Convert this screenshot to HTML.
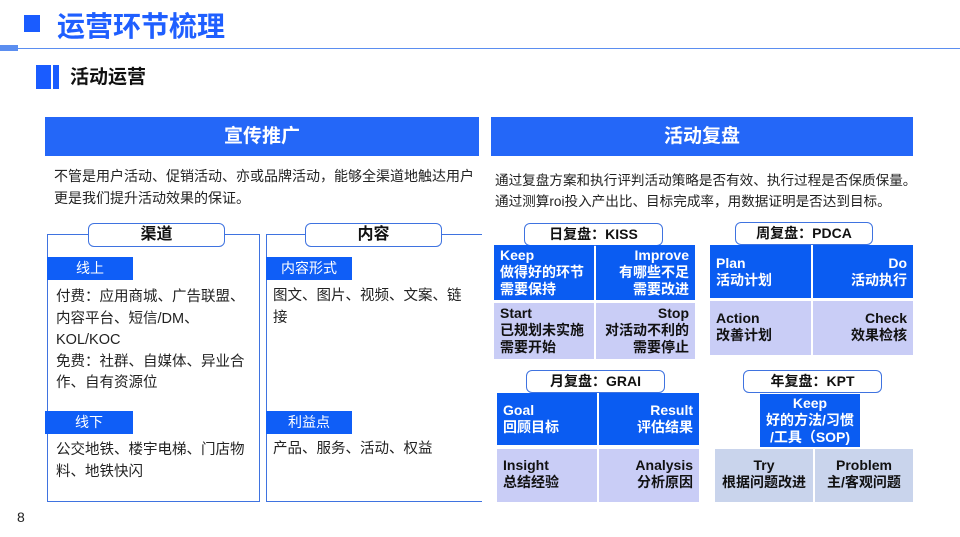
<!DOCTYPE html>
<html><head><meta charset="utf-8"><style>
*{margin:0;padding:0;box-sizing:border-box}
body{width:960px;height:537px;background:#fff;position:relative;overflow:hidden;font-family:"Liberation Sans","Noto Sans CJK SC",sans-serif;color:#222}
.a{position:absolute}
.hdr{background:#2467f8;color:#fff;font-weight:bold;font-size:19px;text-align:center;line-height:39px;height:39px;top:117px}
.box{border:1.5px solid #3f73e0;top:234px;height:268px}
.tab{border:1.5px solid #3f73e0;border-radius:6px;background:#fff;height:24px;font-weight:bold;font-size:16px;text-align:center;line-height:21px;color:#111}
.lab{background:#0f5ef7;color:#fff;font-size:14px;text-align:center;line-height:23px;height:23px;width:86px}
.t{font-size:14.5px;line-height:21.5px;color:#222}
.c{position:absolute;font-weight:bold;font-size:14px;line-height:17px;padding:2px 6px;color:#fff;white-space:nowrap}
.b{background:#0a5cf2}
.l{background:#c9cdf6;color:#111}
.g{background:#c9d4ec;color:#111}
.r{text-align:right}
.rt{font-size:14px;font-weight:bold;height:23px;line-height:20px}
</style></head><body>
<div class="a" style="left:24px;top:15px;width:16px;height:17px;background:#1a5cff"></div>
<div class="a" style="left:57px;top:9px;font-size:28px;font-weight:bold;color:#1f5fff;line-height:36px">运营环节梳理</div>
<div class="a" style="left:0;top:45px;width:18px;height:6px;background:#5b8ef0"></div>
<div class="a" style="left:18px;top:48px;width:942px;height:1px;background:#5b8ef0"></div>
<div class="a" style="left:36px;top:65px;width:15px;height:24px;background:#1a5cff"></div>
<div class="a" style="left:53px;top:65px;width:6px;height:24px;background:#1a5cff"></div>
<div class="a" style="left:70px;top:65px;font-size:19px;font-weight:bold;line-height:26px;color:#111">活动运营</div>

<div class="a hdr" style="left:45px;width:434px">宣传推广</div>
<div class="a hdr" style="left:491px;width:422px">活动复盘</div>
<div class="a t" style="left:54px;top:165px;font-size:14px;line-height:22px">不管是用户活动、促销活动、亦或品牌活动，能够全渠道地触达用户<br>更是我们提升活动效果的保证。</div>
<div class="a t" style="left:495px;top:170px;font-size:13.6px;line-height:21px">通过复盘方案和执行评判活动策略是否有效、执行过程是否保质保量。<br>通过测算roi投入产出比、目标完成率，用数据证明是否达到目标。</div>

<div class="a box" style="left:47px;width:213px"></div>
<div class="a box" style="left:266px;width:216px;border-right:none"></div>
<div class="a tab" style="left:88px;top:223px;width:137px">渠道</div>
<div class="a tab" style="left:305px;top:223px;width:137px">内容</div>
<div class="a lab" style="left:47px;top:257px">线上</div>
<div class="a lab" style="left:45px;top:411px;width:88px">线下</div>
<div class="a lab" style="left:266px;top:257px">内容形式</div>
<div class="a lab" style="left:266px;top:411px">利益点</div>
<div class="a t" style="left:56px;top:287px">付费：应用商城、广告联盟、<br>内容平台、短信/DM、<br>KOL/KOC<br>免费：社群、自媒体、异业合<br>作、自有资源位</div>
<div class="a t" style="left:56px;top:440px">公交地铁、楼宇电梯、门店物<br>料、地铁快闪</div>
<div class="a t" style="left:273px;top:286px">图文、图片、视频、文案、链<br>接</div>
<div class="a t" style="left:273px;top:439px">产品、服务、活动、权益</div>

<div class="a tab rt" style="left:524px;top:223px;width:139px">日复盘：KISS</div>
<div class="c b" style="left:494px;top:245px;width:100px;height:55px">Keep<br>做得好的环节<br>需要保持</div>
<div class="c b r" style="left:596px;top:245px;width:99px;height:55px">Improve<br>有哪些不足<br>需要改进</div>
<div class="c l" style="left:494px;top:303px;width:100px;height:56px">Start<br>已规划未实施<br>需要开始</div>
<div class="c l r" style="left:596px;top:303px;width:99px;height:56px">Stop<br>对活动不利的<br>需要停止</div>

<div class="a tab rt" style="left:735px;top:222px;width:138px">周复盘：PDCA</div>
<div class="c b" style="left:710px;top:245px;width:101px;height:53px;padding-top:10px">Plan<br>活动计划</div>
<div class="c b r" style="left:813px;top:245px;width:100px;height:53px;padding-top:10px">Do<br>活动执行</div>
<div class="c l" style="left:710px;top:301px;width:101px;height:54px;padding-top:9px">Action<br>改善计划</div>
<div class="c l r" style="left:813px;top:301px;width:100px;height:54px;padding-top:9px">Check<br>效果检核</div>

<div class="a tab rt" style="left:526px;top:370px;width:139px">月复盘：GRAI</div>
<div class="c b" style="left:497px;top:393px;width:100px;height:52px;padding-top:9px">Goal<br>回顾目标</div>
<div class="c b r" style="left:599px;top:393px;width:100px;height:52px;padding-top:9px">Result<br>评估结果</div>
<div class="c l" style="left:497px;top:449px;width:100px;height:53px;padding-top:8px">Insight<br>总结经验</div>
<div class="c l r" style="left:599px;top:449px;width:100px;height:53px;padding-top:8px">Analysis<br>分析原因</div>

<div class="a tab rt" style="left:743px;top:370px;width:139px">年复盘：KPT</div>
<div class="c b" style="left:760px;top:394px;width:100px;height:53px;text-align:center;padding:1px 0">Keep<br>好的方法/习惯<br>/工具（SOP)</div>
<div class="c g" style="left:715px;top:449px;width:98px;height:53px;text-align:center;padding-top:8px">Try<br>根据问题改进</div>
<div class="c g" style="left:815px;top:449px;width:98px;height:53px;text-align:center;padding-top:8px">Problem<br>主/客观问题</div>

<div class="a" style="left:17px;top:509px;font-size:14px;color:#222">8</div>
</body></html>
